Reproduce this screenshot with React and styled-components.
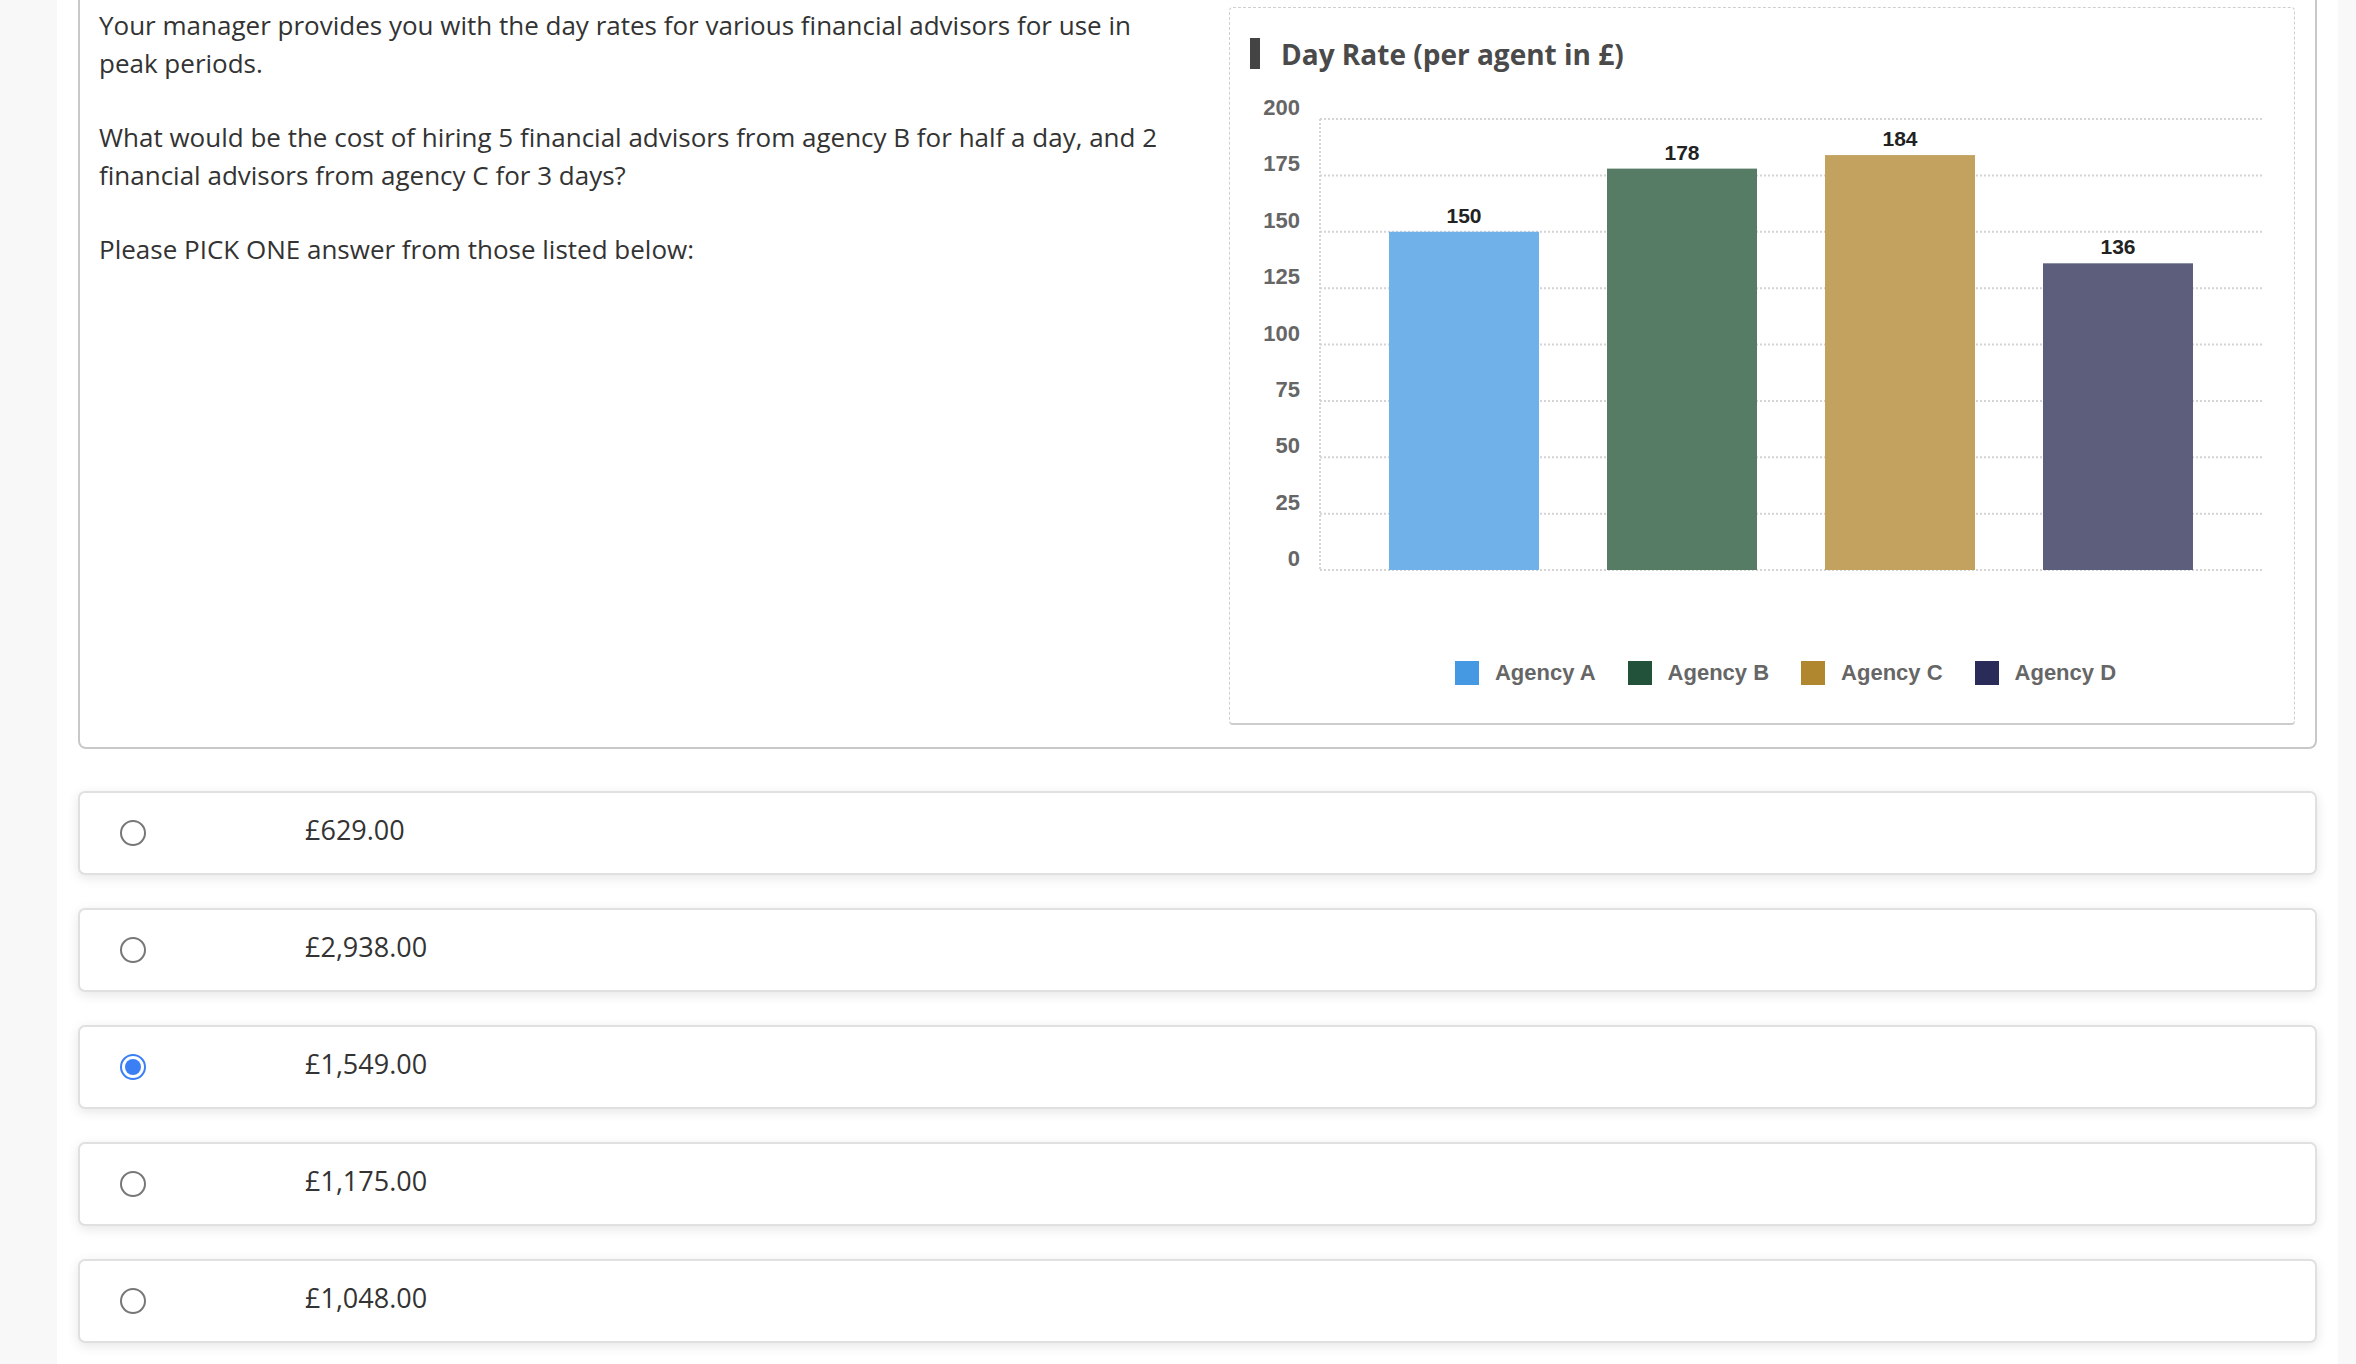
import styled, { createGlobalStyle } from "styled-components"

const GlobalStyle = createGlobalStyle`
  html, body {
    margin: 0;
    padding: 0;
    background: #f8f8f8;
  }
  * { box-sizing: border-box; }
`

const Page = styled.div`
  margin: 0 18px 0 57px;
  min-height: 100vh;
  background: #fff;
  padding: 0 21px 20px 21px;
`

const QuestionCard = styled.div`
  display: flex;
  border: 2px solid #c8c8c8;
  border-top: none;
  border-radius: 0 0 8px 8px;
  padding: 7px 20px 22px 19px;
`

const TextCol = styled.div`
  width: 1130px;
  padding-right: 48px;
  font-family: "Open Sans", sans-serif;
  font-size: 26px;
  line-height: 37.5px;
  color: #333;
`

const Para = styled.p`
  margin: 0 0 37px 0;
`

const ChartPanel = styled.div`
  width: 1066px;
  height: 718px;
  border: 1px dashed #cfcfcf;
  border-bottom: 2px solid #cccccc;
  border-radius: 4px;
  padding: 30px 0 0 0;
`

const ChartTitle = styled.div`
  display: flex;
  align-items: center;
  gap: 21px;
  padding-left: 20px;
  height: 31px;
  font-family: "Open Sans", sans-serif;
  font-weight: 700;
  font-size: 28px;
  color: #4a4a4a;
`

const TitleBar = styled.span`
  width: 10px;
  height: 31px;
  background: #444;
`

const ChartSvg = styled.svg`
  display: block;
  margin-top: 21px;
  font-family: "Liberation Sans", Arial, sans-serif;
  font-weight: 700;
`

const Legend = styled.div`
  display: flex;
  justify-content: center;
  gap: 32px;
  margin: 70px 0 0 84px;
  width: 943px;
`

const LegendItem = styled.div`
  display: flex;
  align-items: center;
  gap: 16px;
  font-family: "Liberation Sans", Arial, sans-serif;
  font-weight: 700;
  font-size: 22px;
  color: #666;
`

const Swatch = styled.span`
  width: 24px;
  height: 24px;
  background: ${(p) => p.color};
`

const Options = styled.div`
  display: flex;
  flex-direction: column;
  gap: 33px;
  margin-top: 42px;
`

const OptionCard = styled.label`
  display: flex;
  align-items: center;
  height: 84px;
  padding: 0 0 8px 40px;
  border: 2px solid #e0e0e0;
  border-radius: 7px;
  background: #fff;
  box-shadow: 0 3px 12px rgba(0, 0, 0, 0.1);
  cursor: pointer;
`

const Radio = styled.span`
  width: 26px;
  height: 26px;
  margin-top: 8px;
  border-radius: 50%;
  border: 2px solid ${(p) => (p.checked ? "#3b7ff5" : "#777")};
  display: flex;
  align-items: center;
  justify-content: center;

  &::after {
    content: "";
    width: 16px;
    height: 16px;
    border-radius: 50%;
    background: ${(p) => (p.checked ? "#3b7ff5" : "transparent")};
  }
`

const OptionText = styled.span`
  margin-left: 159px;
  font-family: "Open Sans", sans-serif;
  font-size: 27px;
  color: #333;
`

const agencies = [
  { name: "Agency A", value: 150, bar: "#71b1ea", key: "#4599e3" },
  { name: "Agency B", value: 178, bar: "#577c66", key: "#22533a" },
  { name: "Agency C", value: 184, bar: "#c2a25e", key: "#b0862e" },
  { name: "Agency D", value: 136, bar: "#5c5e7c", key: "#2b2b59" },
]

const answers = ["£629.00", "£2,938.00", "£1,549.00", "£1,175.00", "£1,048.00"]

const BASE = 480
const SCALE = 2.255
const gy = (v) => BASE - v * SCALE

const BarChart = () => {
  const ticks = [0, 25, 50, 75, 100, 125, 150, 175, 200]
  return (
    <ChartSvg width="1064" height="500" viewBox="0 0 1064 500">
      {ticks.map((t) => (
        <g key={t}>
          <line x1="90" x2="1033" y1={gy(t)} y2={gy(t)} stroke="#d4d4d4" strokeWidth="2" strokeDasharray="2 2" />
          <text x="70" y={gy(t) - 4} fontSize="22" fill="#666" textAnchor="end">{t}</text>
        </g>
      ))}
      <line x1="90" x2="90" y1={gy(200)} y2={gy(0)} stroke="#d4d4d4" strokeWidth="2" strokeDasharray="2 2" />
      {agencies.map((a, i) => {
        const x = 159 + i * 218
        return (
          <g key={a.name}>
            <rect x={x} y={gy(a.value)} width="150" height={a.value * SCALE} fill={a.bar} />
            <text x={x + 75} y={gy(a.value) - 9} fontSize="21" fill="#222" textAnchor="middle">{a.value}</text>
          </g>
        )
      })}
    </ChartSvg>
  )
}

const App = () => {
  const selected = 2
  return (
    <>
      <GlobalStyle />
      <Page>
        <QuestionCard>
          <TextCol>
            <Para>Your manager provides you with the day rates for various financial advisors for use in peak periods.</Para>
            <Para>What would be the cost of hiring 5 financial advisors from agency B for half a day, and 2 financial advisors from agency C for 3 days?</Para>
            <Para>Please PICK ONE answer from those listed below:</Para>
          </TextCol>
          <ChartPanel>
            <ChartTitle>
              <TitleBar />
              Day Rate (per agent in £)
            </ChartTitle>
            <BarChart />
            <Legend>
              {agencies.map((a) => (
                <LegendItem key={a.name}>
                  <Swatch color={a.key} />
                  {a.name}
                </LegendItem>
              ))}
            </Legend>
          </ChartPanel>
        </QuestionCard>
        <Options>
          {answers.map((ans, i) => (
            <OptionCard key={ans}>
              <Radio checked={i === selected} />
              <OptionText>{ans}</OptionText>
            </OptionCard>
          ))}
        </Options>
      </Page>
    </>
  )
}

export default App
